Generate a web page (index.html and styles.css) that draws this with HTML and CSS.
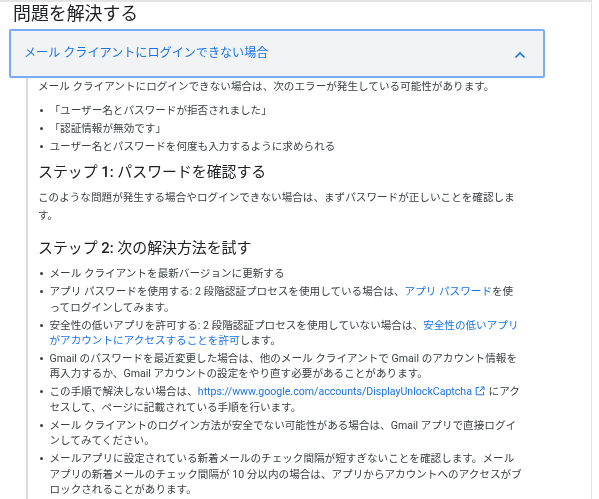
FILE: index.html
```html
<!DOCTYPE html>
<html lang="ja">
<head>
<meta charset="utf-8">
<title>問題を解決する</title>
<link rel="stylesheet" href="styles.css">
</head>
<body>
<div class="page">
  <main class="content">
    <h2 class="title">問題を解決する</h2>
    <section class="accordion">
      <button class="acc-head" type="button">
        <span class="acc-title">メール クライアントにログインできない場合</span>
        <svg class="chev" width="12" height="8" viewBox="0 0 12 8"><path d="M1.5 6.5 6 2l4.5 4.5" fill="none" stroke="#1a73e8" stroke-width="1.6"/></svg>
      </button>
      <div class="acc-body">
        <p class="intro">メール クライアントにログインできない場合は、次のエラーが発生している可能性があります。</p>
        <ul class="list first">
          <li>「ユーザー名とパスワードが拒否されました」</li>
          <li>「認証情報が無効です」</li>
          <li>ユーザー名とパスワードを何度も入力するように求められる</li>
        </ul>
        <h3 class="step">ステップ <b>1:</b> パスワードを確認する</h3>
        <p class="para">このような問題が発生する場合やログインできない場合は、まずパスワードが正しいことを確認しま<br>す。</p>
        <h3 class="step second">ステップ <b>2:</b> 次の解決方法を試す</h3>
        <ul class="list">
          <li>メール クライアントを最新バージョンに更新する</li>
          <li>アプリ パスワードを使用する: 2 段階認証プロセスを使用している場合は、<a href="#">アプリ パスワード</a>を使<br>ってログインしてみます。</li>
          <li>安全性の低いアプリを許可する: 2 段階認証プロセスを使用していない場合は、<a href="#">安全性の低いアプリ<br>がアカウントにアクセスすることを許可</a>します。</li>
          <li>Gmail のパスワードを最近変更した場合は、他のメール クライアントで Gmail のアカウント情報を<br>再入力するか、Gmail アカウントの設定をやり直す必要があることがあります。</li>
          <li>この手順で解決しない場合は、<a href="#" class="url">https://www.google.com/accounts/DisplayUnlockCaptcha<svg class="ext" width="10" height="10" viewBox="0 0 10 10"><path d="M4 1.5H1.2v7.3h7.3V6M5.8 1H9v3.2M9 1 4.6 5.4" fill="none" stroke="#1a73e8" stroke-width="1"/></svg></a> にアク<br>セスして、ページに記載されている手順を行います。</li>
          <li>メール クライアントのログイン方法が安全でない可能性がある場合は、Gmail アプリで直接ログイ<br>ンしてみてください。</li>
          <li>メールアプリに設定されている新着メールのチェック間隔が短すぎないことを確認します。メール<br>アプリの新着メールのチェック間隔が 10 分以内の場合は、アプリからアカウントへのアクセスがブ<br>ロックされることがあります。</li>
        </ul>
      </div>
    </section>
  </main>
</div>
</body>
</html>
```
FILE: styles.css
```css
* { box-sizing: border-box; }
html, body { margin: 0; padding: 0; background: #fff; }
body {
  height: 499px;
  overflow: hidden;
  font-family: Roboto, "Noto Sans CJK JP", sans-serif;
  color: #3c4043;
}
.page {
  width: 592px;
  height: 499px;
  overflow: hidden;
  border-top: 2px solid #e4e4e4;
  border-right: 1px solid #e4e4e4;
  filter: blur(0.3px);
}
.content { padding: 0 0 0 9px; width: 540px; }
.title {
  margin: 0;
  padding-left: 4px;
  height: 27px;
  font-size: 17.9px;
  line-height: 23px;
  font-weight: 400;
  color: #202124;
  white-space: nowrap;
}
.acc-head {
  display: flex;
  align-items: center;
  justify-content: space-between;
  width: 536px;
  height: 49px;
  padding: 0 17px 0 13px;
  background: #f1f3f4;
  border: 2.5px solid #7baaf7;
  border-radius: 2px;
  font: inherit;
}
.acc-title { font-size: 12.1px; line-height: 15px; margin-top: -1px; color: #1a73e8; white-space: nowrap; }
.chev { display: block; margin-top: 3px; }
.acc-body {
  margin-left: 17px;
  padding-left: 10px;
  border-left: 2px solid #dadce0;
  height: 500px;
  font-size: 10.6px;
  line-height: 15.5px;
  white-space: nowrap;
}
.intro { margin: 0; padding-top: 1px; height: 25px; }
.para { margin: 0; line-height: 18px; }
.list { margin: 0; padding: 0; list-style: none; }
.list li { position: relative; padding-left: 11.5px; margin-bottom: 2.4px; }
.list li::before {
  content: "";
  position: absolute;
  left: 1.5px;
  top: 6px;
  width: 3px;
  height: 3px;
  border-radius: 50%;
  background: #3c4043;
}
.step {
  margin: 8px 0 7px;
  font-size: 14.9px;
  line-height: 20px;
  font-weight: 400;
  color: #202124;
}
.step b { font-weight: 500; }
.step.second { margin: 13px 0 8px; }
a { color: #1a73e8; text-decoration: none; }
.ext { margin: 0 1px 0 3px; vertical-align: -1px; }
```
